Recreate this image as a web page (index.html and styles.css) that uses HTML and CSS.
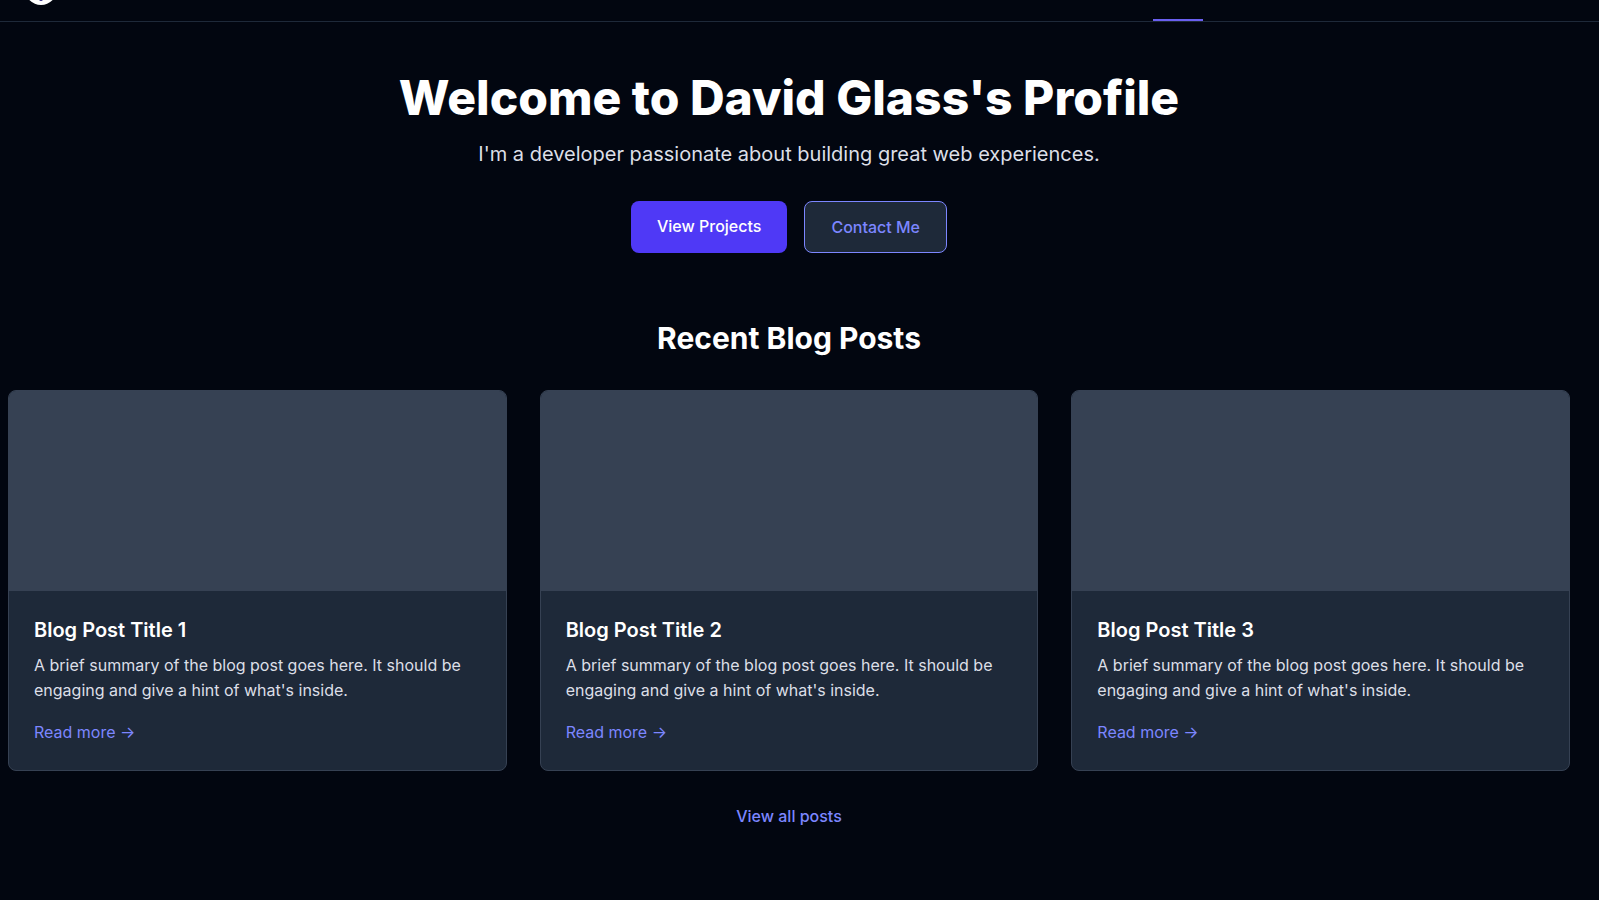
FILE: index.html
```
<!DOCTYPE html>
<html lang="en">
<head>
    <meta charset="UTF-8">
    <meta name="viewport" content="width=device-width, initial-scale=1.0">
    <title>David Glass</title>
    <link rel="stylesheet" href="styles.css">
</head>
<body>
    <header class="header">
        <a class="logo" href="#" aria-label="Home">
            <svg width="32" height="5" viewBox="0 27 32 5">
                <circle cx="16" cy="16" r="16" fill="#fff"/>
                <circle cx="16" cy="26" r="2" fill="#312c85"/>
            </svg>
        </a>
        <nav class="nav">
            <a class="nav-link active" href="#" aria-label="Profile"></a>
        </nav>
    </header>

    <main class="container">
        <section class="hero">
            <h1 class="title">Welcome to David Glass's Profile</h1>
            <p class="subtitle">I'm a developer passionate about building great web experiences.</p>
            <div class="actions">
                <a class="button" href="#">View Projects</a>
                <a class="button button-outline" href="#">Contact Me</a>
            </div>
        </section>

        <section class="posts">
            <h2 class="posts-title">Recent Blog Posts</h2>
            <div class="post-grid">
                <article class="post">
                    <div class="post-image"></div>
                    <div class="post-body">
                        <h3>Blog Post Title 1</h3>
                        <p>A brief summary of the blog post goes here. It should be engaging and give a hint of what's inside.</p>
                        <a class="link" href="#">Read more →</a>
                    </div>
                </article>
                <article class="post">
                    <div class="post-image"></div>
                    <div class="post-body">
                        <h3>Blog Post Title 2</h3>
                        <p>A brief summary of the blog post goes here. It should be engaging and give a hint of what's inside.</p>
                        <a class="link" href="#">Read more →</a>
                    </div>
                </article>
                <article class="post">
                    <div class="post-image"></div>
                    <div class="post-body">
                        <h3>Blog Post Title 3</h3>
                        <p>A brief summary of the blog post goes here. It should be engaging and give a hint of what's inside.</p>
                        <a class="link" href="#">Read more →</a>
                    </div>
                </article>
            </div>
            <div class="view-all">
                <a class="link" href="#">View all posts</a>
            </div>
        </section>
    </main>
</body>
</html>
```
FILE: styles.css
```
body {
    font-family: Inter, sans-serif;
    font-size: 16px;
    line-height: 25px;
    margin: 0;
    background-color: #020610;
    color: #dcdfe7;
}

h1, h2, h3, p {
    margin: 0;
}

a {
    text-decoration: none;
}

.header {
    display: flex;
    justify-content: space-between;
    align-items: flex-start;
    height: 21px;
    padding: 0 396px 0 25px;
    border-bottom: 1px solid #1e2939;
}

.logo, .logo svg {
    display: block;
}

.nav {
    display: flex;
    height: 100%;
}

.nav-link {
    width: 50px;
    box-sizing: border-box;
}

.nav-link.active {
    border-bottom: 2px solid #6a5ff0;
}

.container {
    padding: 50px 29px 50px 8px;
}

.hero {
    text-align: center;
    margin-bottom: 66px;
}

.title {
    color: #fff;
    font-size: 48px;
    line-height: 52px;
    font-weight: 800;
    margin-bottom: 16px;
}

.subtitle {
    font-size: 20px;
    line-height: 29px;
    margin-bottom: 32px;
}

.actions {
    display: flex;
    justify-content: center;
    gap: 17px;
}

.button {
    background-color: #4f39f6;
    color: #fff;
    font-weight: 500;
    line-height: 26px;
    padding: 12px 26px;
    border-radius: 8px;
}

.button-outline {
    background-color: #1e2939;
    color: #7c86ff;
    border: 1px solid #7c86ff;
}

.posts-title {
    color: #fff;
    font-size: 30px;
    line-height: 39px;
    font-weight: 700;
    text-align: center;
    margin-bottom: 32px;
}

.post-grid {
    display: grid;
    grid-template-columns: repeat(3, 1fr);
    gap: 33px;
    margin-bottom: 33px;
}

.post {
    background-color: #1e2939;
    border: 1px solid #364153;
    border-radius: 8px;
    overflow: hidden;
}

.post-image {
    height: 200px;
    background-color: #364153;
}

.post-body {
    padding: 25px;
}

.post-body h3 {
    color: #fff;
    font-size: 20px;
    line-height: 29px;
    font-weight: 600;
    margin-bottom: 8px;
}

.post-body p {
    margin-bottom: 17px;
}

.link {
    color: #7c86ff;
}

.link:hover {
    color: #a3b3ff;
}

.view-all {
    text-align: center;
    font-weight: 500;
}
```
